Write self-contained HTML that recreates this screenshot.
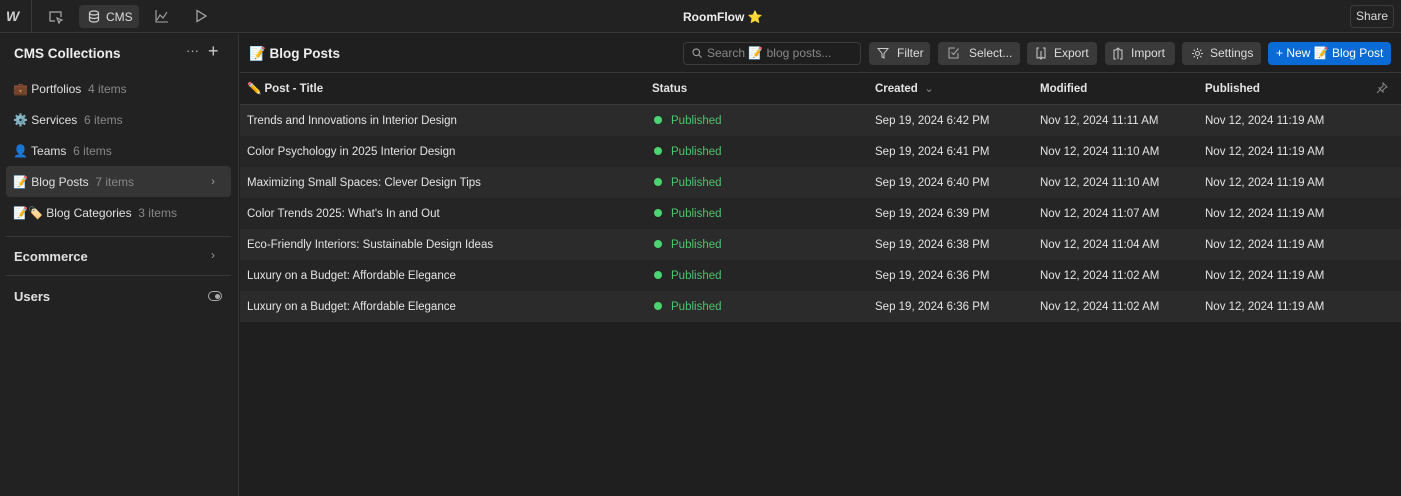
<!DOCTYPE html><html><head><style>
*{box-sizing:border-box;margin:0;padding:0}
body{width:1401px;height:496px;background:#1f1f1f;font-family:"Liberation Sans",sans-serif;color:#e0e0e0;font-size:12px;overflow:hidden;position:relative}
.a{position:absolute;white-space:nowrap}
.top{left:0;top:0;width:1401px;height:33px;background:#222;border-bottom:1px solid #383838}
.side{left:0;top:34px;width:239px;height:462px;background:#222;border-right:1px solid #383838}
.btn{position:absolute;top:42px;height:23px;background:#3a3a3a;border-radius:4px;color:#ddd;font-size:12px;line-height:23px;padding-left:28px}
.row{position:absolute;left:240px;width:1161px;height:31px;line-height:31px;font-size:11.5px;color:#e4e4e4}
.row span{position:absolute;top:1px}
.g{color:#888}
.pub{color:#4cc46e}
.dot{display:block;width:8px;height:8px;border-radius:50%;background:#4cd471;position:absolute;left:414px;top:11px}
</style></head><body>
<div class="a top"></div>
<div class="a" style="left:31px;top:0;width:1px;height:33px;background:#383838"></div>
<div class="a" style="left:6px;top:8px;font-weight:bold;font-style:italic;font-size:14px;color:#ccc">W</div>
<svg class="a" style="left:48px;top:9px" width="16" height="16" viewBox="0 0 16 16" fill="none" stroke="#aaa" stroke-width="1.2"><path d="M7 12H2V3h11v5"/><path d="M9 9l5 2-2 1-1 2z"/></svg>
<div class="a" style="left:79px;top:5px;width:60px;height:23px;background:#363636;border-radius:4px"></div>
<svg class="a" style="left:88px;top:10px" width="12" height="13" viewBox="0 0 12 13" fill="none" stroke="#ccc" stroke-width="1.2"><ellipse cx="6" cy="3" rx="4.5" ry="2"/><path d="M1.5 3v7c0 1.1 2 2 4.5 2s4.5-.9 4.5-2V3M1.5 6.5c0 1.1 2 2 4.5 2s4.5-.9 4.5-2"/></svg>
<div class="a" style="left:106px;top:10px;font-size:12px;color:#ddd">CMS</div>
<svg class="a" style="left:155px;top:9px" width="14" height="14" viewBox="0 0 14 14" fill="none" stroke="#aaa" stroke-width="1.1"><path d="M1 1v12h12M2 11l3-5 3 3 4-6"/></svg>
<svg class="a" style="left:195px;top:9px" width="12" height="14" viewBox="0 0 12 14" fill="none" stroke="#aaa" stroke-width="1.2"><path d="M2 1.5v11l9-5.5z"/></svg>
<div class="a" style="left:683px;top:10px;font-weight:bold;font-size:12px;color:#eee">RoomFlow ⭐</div>
<div class="a" style="left:1350px;top:5px;width:44px;height:23px;border:1px solid #3c3c3c;border-radius:4px;text-align:center;line-height:21px;color:#ddd">Share</div>
<div class="a side"></div>
<div class="a" style="left:14px;top:46px;font-weight:bold;font-size:13.5px;color:#eee">CMS Collections</div>
<div class="a" style="left:186px;top:43px;color:#bbb;font-size:13px">···</div>
<div class="a" style="left:208px;top:41px;color:#ccc;font-size:18px">+</div>
<div class="a" style="left:13px;top:82px">💼 Portfolios <span class="g">&nbsp;4 items</span></div>
<div class="a" style="left:13px;top:113px">⚙️ Services <span class="g">&nbsp;6 items</span></div>
<div class="a" style="left:13px;top:144px">👤 Teams <span class="g">&nbsp;6 items</span></div>
<div class="a" style="left:6px;top:166px;width:225px;height:31px;background:#353535;border-radius:4px"></div>
<div class="a" style="left:13px;top:175px">📝 Blog Posts <span class="g">&nbsp;7 items</span></div>
<div class="a" style="left:211px;top:174px;color:#999">›</div>
<div class="a" style="left:13px;top:206px">📝🏷️ Blog Categories <span class="g">&nbsp;3 items</span></div>
<div class="a" style="left:6px;top:236px;width:225px;height:1px;background:#383838"></div>
<div class="a" style="left:14px;top:249px;font-weight:bold;font-size:13px">Ecommerce</div>
<div class="a" style="left:211px;top:248px;color:#999">›</div>
<div class="a" style="left:6px;top:275px;width:225px;height:1px;background:#383838"></div>
<div class="a" style="left:14px;top:289px;font-weight:bold;font-size:13px">Users</div>
<div class="a" style="left:208px;top:291px;width:14px;height:10px;border:1.2px solid #aaa;border-radius:5px"><div style="position:absolute;right:1.5px;top:1.5px;width:5px;height:5px;border-radius:50%;background:#aaa"></div></div>
<div class="a" style="left:249px;top:46px;font-weight:bold;font-size:13.5px;color:#eee">📝 Blog Posts</div>
<div class="a" style="left:683px;top:42px;width:178px;height:23px;border:1px solid #3c3c3c;border-radius:4px;background:#1e1e1e;color:#888;line-height:21px;padding-left:23px">Search 📝 blog posts...</div>
<svg class="a" style="left:692px;top:48px" width="10" height="10" viewBox="0 0 10 10" fill="none" stroke="#999" stroke-width="1.2"><circle cx="4.3" cy="4.3" r="3.3"/><path d="M6.8 6.8L9.5 9.5"/></svg>
<div class="btn" style="left:869px;width:61px">Filter</div>
<svg class="a" style="left:877px;top:47px" width="12" height="12" viewBox="0 0 12 12" fill="none" stroke="#ccc" stroke-width="1"><path d="M1 1.5h10L7 6.5V11L5 10V6.5z"/></svg>
<div class="btn" style="left:938px;width:82px;padding-left:31px">Select...</div>
<svg class="a" style="left:948px;top:47px" width="12" height="12" viewBox="0 0 12 12" fill="none" stroke="#aaa" stroke-width="1"><path d="M10 6v5H1V1h6M3.5 5.5l2 2 5-6"/></svg>
<div class="btn" style="left:1027px;width:70px;padding-left:27px">Export</div>
<svg class="a" style="left:1035px;top:46px" width="12" height="14" viewBox="0 0 12 14" fill="none" stroke="#ccc" stroke-width="1"><path d="M4 2H2v10h2M8 2h2v10H8M6 5v8M4 11l2 2 2-2"/></svg>
<div class="btn" style="left:1105px;width:70px;padding-left:26px">Import</div>
<svg class="a" style="left:1112px;top:46px" width="12" height="14" viewBox="0 0 12 14" fill="none" stroke="#ccc" stroke-width="1"><path d="M4 4H2v9h2M8 4h2v9H8M6 13V2M4 4l2-2 2 2"/></svg>
<div class="btn" style="left:1182px;width:79px">Settings</div>
<svg class="a" style="left:1191px;top:47px" width="13" height="13" viewBox="0 0 13 13" fill="none" stroke="#ccc" stroke-width="1"><circle cx="6.5" cy="6.5" r="2"/><path d="M6.5 1v2M6.5 10v2M1 6.5h2M10 6.5h2M2.6 2.6l1.4 1.4M9 9l1.4 1.4M2.6 10.4L4 9M9 4l1.4-1.4"/></svg>
<div class="btn" style="left:1268px;width:123px;background:#0a6bd6;color:#fff;padding-left:8px">+ New 📝 Blog Post</div>
<div class="a" style="left:240px;top:72px;width:1161px;height:1px;background:#383838"></div>
<div class="row" style="top:73px;font-weight:bold;border-bottom:1px solid #383838;height:32px">
<span style="left:7px">✏️ Post - Title</span><span style="left:412px">Status</span><span style="left:635px">Created <span style="position:static;color:#888;font-weight:normal">&nbsp;⌄</span></span><span style="left:800px">Modified</span><span style="left:965px">Published</span></div>
<svg class="a" style="left:1376px;top:82px" width="12" height="12" viewBox="0 0 12 12" fill="none" stroke="#888" stroke-width="1"><path d="M7 1l4 4-2 1-2 2v2L3 6h2l2-2z"/><path d="M4.5 7.5L1 11"/></svg>
<div class="row" style="top:105px;background:#2b2b2b"><span style="left:7px">Trends and Innovations in Interior Design</span><i class="dot"></i><span class="pub" style="left:431px">Published</span><span style="left:635px">Sep 19, 2024 6:42 PM</span><span style="left:800px">Nov 12, 2024 11:11 AM</span><span style="left:965px">Nov 12, 2024 11:19 AM</span></div>
<div class="row" style="top:136px;background:#252525"><span style="left:7px">Color Psychology in 2025 Interior Design</span><i class="dot"></i><span class="pub" style="left:431px">Published</span><span style="left:635px">Sep 19, 2024 6:41 PM</span><span style="left:800px">Nov 12, 2024 11:10 AM</span><span style="left:965px">Nov 12, 2024 11:19 AM</span></div>
<div class="row" style="top:167px;background:#2b2b2b"><span style="left:7px">Maximizing Small Spaces: Clever Design Tips</span><i class="dot"></i><span class="pub" style="left:431px">Published</span><span style="left:635px">Sep 19, 2024 6:40 PM</span><span style="left:800px">Nov 12, 2024 11:10 AM</span><span style="left:965px">Nov 12, 2024 11:19 AM</span></div>
<div class="row" style="top:198px;background:#252525"><span style="left:7px">Color Trends 2025: What's In and Out</span><i class="dot"></i><span class="pub" style="left:431px">Published</span><span style="left:635px">Sep 19, 2024 6:39 PM</span><span style="left:800px">Nov 12, 2024 11:07 AM</span><span style="left:965px">Nov 12, 2024 11:19 AM</span></div>
<div class="row" style="top:229px;background:#2b2b2b"><span style="left:7px">Eco-Friendly Interiors: Sustainable Design Ideas</span><i class="dot"></i><span class="pub" style="left:431px">Published</span><span style="left:635px">Sep 19, 2024 6:38 PM</span><span style="left:800px">Nov 12, 2024 11:04 AM</span><span style="left:965px">Nov 12, 2024 11:19 AM</span></div>
<div class="row" style="top:260px;background:#252525"><span style="left:7px">Luxury on a Budget: Affordable Elegance</span><i class="dot"></i><span class="pub" style="left:431px">Published</span><span style="left:635px">Sep 19, 2024 6:36 PM</span><span style="left:800px">Nov 12, 2024 11:02 AM</span><span style="left:965px">Nov 12, 2024 11:19 AM</span></div>
<div class="row" style="top:291px;background:#2b2b2b"><span style="left:7px">Luxury on a Budget: Affordable Elegance</span><i class="dot"></i><span class="pub" style="left:431px">Published</span><span style="left:635px">Sep 19, 2024 6:36 PM</span><span style="left:800px">Nov 12, 2024 11:02 AM</span><span style="left:965px">Nov 12, 2024 11:19 AM</span></div>
</body></html>
